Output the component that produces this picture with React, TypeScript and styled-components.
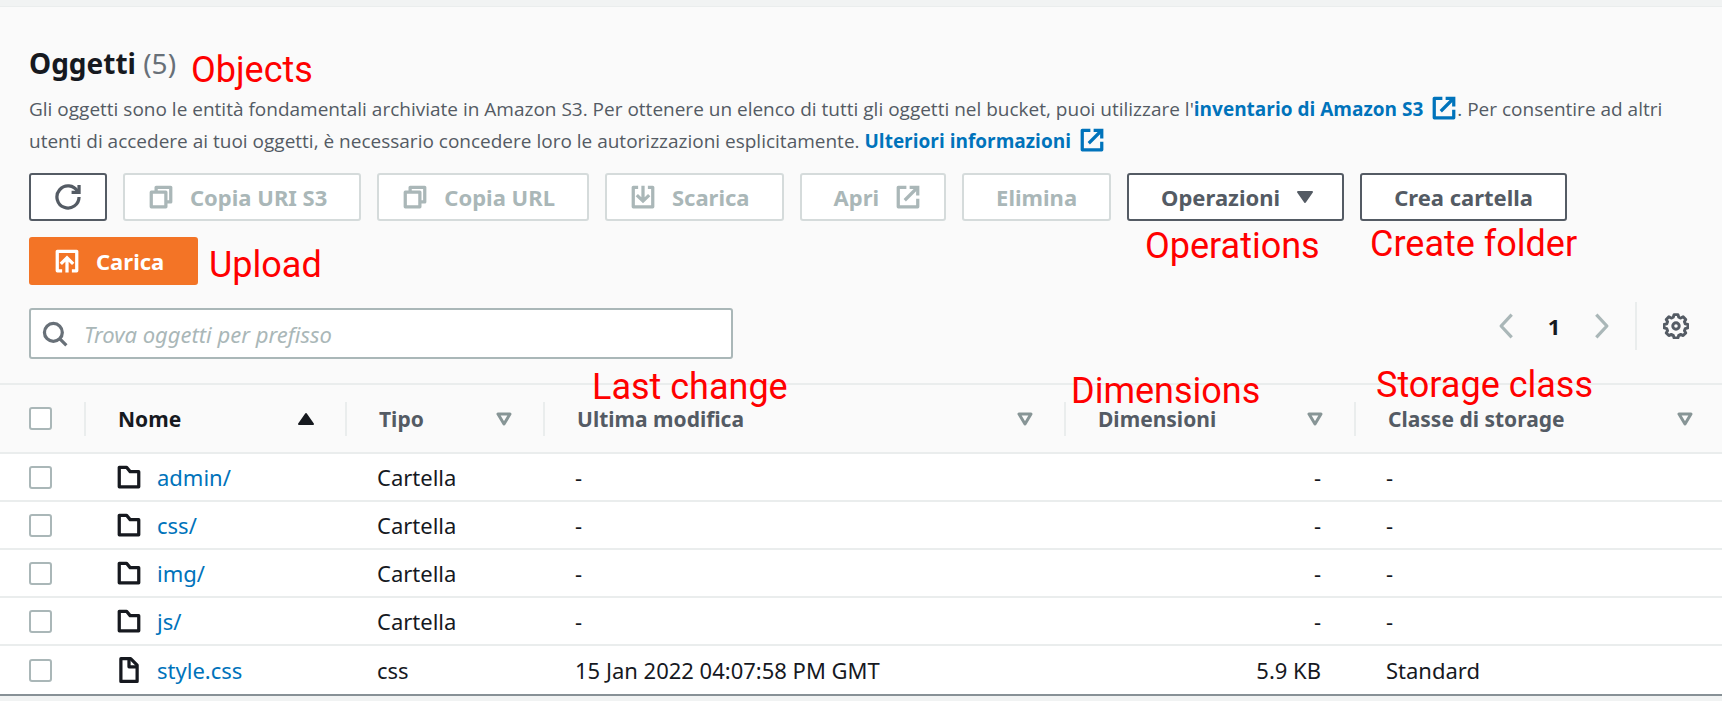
import React from "react";
import styled, { createGlobalStyle, css } from "styled-components";

const Global = createGlobalStyle`
  * { box-sizing: border-box; }
  body { margin: 0; background: #f1f3f3; color: #16191f; font-family: "Noto Sans", "Open Sans", sans-serif; font-size: 22px; }
  button, input { font-family: inherit; }
`;

const Page = styled.main`
  padding: 6px 0;
`;

const Panel = styled.section`
  position: relative;
  background: #fafafa;
  border-top: 1px solid #eaeded;
  border-bottom: 2px solid #879196;
`;

const Header = styled.header`
  padding: 38px 29px 0;
`;

const Title = styled.h2`
  margin: 0;
  font-size: 28px;
  line-height: 36px;
  font-weight: 700;
`;

const Count = styled.span`
  color: #687078;
  font-weight: 400;
`;

const Description = styled.p`
  margin: 12px 0 0;
  color: #545b64;
  font-family: "Open Sans", "Noto Sans", sans-serif;
  font-size: 19px;
  line-height: 32px;
`;

const InfoLink = styled.a`
  color: #0073bb;
  font-weight: 700;
  text-decoration: none;
  white-space: nowrap;
  svg { margin-left: 8px; vertical-align: -5px; }
`;

const Toolbar = styled.div`
  display: flex;
  flex-wrap: wrap;
  gap: 16px;
  margin-top: 16px;
`;

type Glyph = "only" | "start" | "end" | "caret";

const buttonPadding: Record<Glyph, string> = {
  only: "0 24px",
  start: "0 32px 0 23px",
  end: "0 23px 0 32px",
  caret: "0 28px 0 32px",
};

const ActionButton = styled.button<{ $primary?: boolean; $glyph?: Glyph }>`
  display: flex;
  align-items: center;
  gap: 16px;
  height: 48px;
  padding: ${(p) => (p.$glyph ? buttonPadding[p.$glyph] : "0 32px")};
  border: 2px solid #545b64;
  border-radius: 3px;
  background: #fff;
  color: #545b64;
  font-size: 22px;
  font-weight: 700;
  &:disabled { border-color: #d5dbdb; color: #aab7b8; }
  ${(p) => p.$primary && css`
    border-color: #f37426;
    background: #f37426;
    color: #fff;
  `}
`;

const Tools = styled.div`
  display: flex;
  justify-content: space-between;
  align-items: flex-start;
  padding: 17px 33px 24px 29px;
`;

const Search = styled.label`
  display: flex;
  align-items: center;
  gap: 16px;
  width: 704px;
  height: 51px;
  margin-top: 6px;
  padding: 0 11px;
  border: 2px solid #aab7b8;
  border-radius: 3px;
  background: #fff;
  color: #687078;
`;

const SearchInput = styled.input`
  flex: 1;
  min-width: 0;
  padding: 0;
  border: 0;
  outline: 0;
  background: none;
  font-size: 22px;
  &::placeholder { color: #aab7b8; font-style: italic; opacity: 1; }
`;

const Pager = styled.nav`
  display: flex;
  align-items: center;
  height: 48px;
`;

const PlainButton = styled.button`
  display: flex;
  padding: 0;
  border: 0;
  background: none;
  color: #545b64;
  &:disabled { color: #aab7b8; }
`;

const PageNumber = styled(PlainButton)`
  justify-content: center;
  width: 70px;
  color: #16191f;
  font-size: 22px;
  font-weight: 700;
`;

const Settings = styled.div`
  display: flex;
  align-items: center;
  height: 48px;
  margin-left: 20px;
  padding-left: 26px;
  border-left: 2px solid #eaeded;
`;

const Table = styled.table`
  width: 100%;
  table-layout: fixed;
  border-collapse: separate;
  border-spacing: 0;
`;

const Col = styled.col<{ $w?: number }>`
  width: ${(p) => (p.$w ? p.$w + "px" : "auto")};
`;

const HeadInner = styled.div<{ $first?: boolean; $active?: boolean }>`
  display: flex;
  align-items: center;
  justify-content: space-between;
  height: 34px;
  padding: 0 30px 0 32px;
  border-left: 2px solid #eaeded;
  color: ${(p) => (p.$active ? "#16191f" : "#545b64")};
  font-size: 21px;
  font-weight: 700;
  ${(p) => p.$first && css`
    padding: 0 0 0 29px;
    border-left: 0;
  `}
`;

const HeadCell = styled.th`
  height: 71px;
  padding: 0;
  border-top: 2px solid #eaeded;
  border-bottom: 2px solid #eaeded;
  text-align: left;
  &:last-child ${HeadInner} { padding-right: 28px; }
`;

const SortIcon = styled.svg<{ $hollow?: boolean }>`
  flex: none;
  color: ${(p) => (p.$hollow ? "#879596" : "inherit")};
`;

const Cell = styled.td<{ $end?: boolean }>`
  height: 48px;
  padding: 0 33px 0 32px;
  border-bottom: 2px solid #eaeded;
  background: #fff;
  font-size: 22px;
  line-height: 28px;
  text-align: ${(p) => (p.$end ? "right" : "left")};
  white-space: nowrap;
  tr:last-child & { border-bottom: 0; }
`;

const CheckCell = styled(Cell)`
  padding: 0 0 0 29px;
`;

const Check = styled.input`
  display: block;
  appearance: none;
  width: 23px;
  height: 23px;
  margin: 0;
  border: 2px solid #aab7b8;
  border-radius: 3px;
  background: #fff;
`;

const ObjectName = styled.div`
  display: flex;
  align-items: center;
  gap: 15px;
`;

const ObjectLink = styled.a`
  color: #0073bb;
  text-decoration: none;
`;

const Note = styled.span<{ $x: number; $y: number }>`
  position: absolute;
  left: ${(p) => p.$x}px;
  top: ${(p) => p.$y}px;
  color: #f00;
  font-family: Roboto, sans-serif;
  font-size: 36px;
  line-height: 42px;
  white-space: nowrap;
  pointer-events: none;
`;

const shapes = {
  refresh: (
    <>
      <path d="M14.8 8A6.8 6.8 0 1 1 13.9 4.6" />
      <path d="M14.8.6V5.2h-4.6" strokeLinejoin="miter" />
    </>
  ),
  copy: (
    <>
      <path d="M2 5h9v9H2z" />
      <path d="M5 5V2h9v9h-3" />
    </>
  ),
  download: (
    <>
      <path d="M5 2H2v12h12V2h-3" />
      <path d="M8 1v9.5M4.2 6.8 8 10.5l3.8-3.7" strokeLinejoin="miter" />
    </>
  ),
  upload: (
    <>
      <path d="M5 14H2V2h12v12h-3" />
      <path d="M8 15V6M4.2 9.8 8 6l3.8 3.8" strokeLinejoin="miter" />
    </>
  ),
  external: (
    <>
      <path d="M10 2h4v4" strokeLinecap="square" strokeLinejoin="miter" />
      <path d="m6 10 8-8" />
      <path d="M14 9v5H2V2h5" />
    </>
  ),
  search: (
    <>
      <circle cx="7" cy="7" r="5.5" />
      <path d="m11 11 4 4" />
    </>
  ),
  left: <path d="M11.5 1 5 8l6.5 7" />,
  right: <path d="M4.5 1 11 8l-6.5 7" />,
  folder: <path d="M2 14V2h4.5l2.2 2.7H14V14z" />,
  file: (
    <>
      <path d="M3 1h6l4 4v10H3z" />
      <path d="M8 1v5h5" />
    </>
  ),
  gear: (
    <>
      <path d="M6.8 1h2.4l.5 1.6 1.2.5 1.5-.8 1.6 1.7-.8 1.4.5 1.3 1.6.4v2l-1.6.5-.5 1.3.8 1.4-1.6 1.6-1.5-.7-1.2.5-.5 1.6H6.8l-.5-1.6-1.2-.5-1.5.7-1.6-1.6.8-1.4-.5-1.3-1.6-.5v-2l1.6-.4.5-1.3L2 4l1.6-1.7 1.5.8 1.2-.5z" />
      <circle cx="8" cy="8" r="2" />
    </>
  ),
};

function Icon({ name }: { name: keyof typeof shapes }) {
  return (
    <svg width="26" height="26" viewBox="0 0 16 16" fill="none" stroke="currentColor" strokeWidth={name === "gear" ? 1.8 : 2} strokeLinejoin="round" aria-hidden="true">
      {shapes[name]}
    </svg>
  );
}

function Caret({ up, hollow }: { up?: boolean; hollow?: boolean }) {
  return (
    <SortIcon $hollow={hollow} width="18" height="14" viewBox="0 0 18 14" stroke="currentColor" strokeLinejoin="round" strokeWidth={hollow ? 3 : 2} fill={hollow ? "none" : "currentColor"} aria-hidden="true">
      <path d={up ? "M2 12 9 2l7 10z" : hollow ? "M3 2h12L9 12z" : "M2 2h14L9 12z"} />
    </SortIcon>
  );
}

const columns = ["Nome", "Tipo", "Ultima modifica", "Dimensioni", "Classe di storage"];

const objects = [
  { name: "admin/", type: "Cartella", modified: "-", size: "-", storage: "-" },
  { name: "css/", type: "Cartella", modified: "-", size: "-", storage: "-" },
  { name: "img/", type: "Cartella", modified: "-", size: "-", storage: "-" },
  { name: "js/", type: "Cartella", modified: "-", size: "-", storage: "-" },
  { name: "style.css", type: "css", modified: "15 Jan 2022 04:07:58 PM GMT", size: "5.9 KB", storage: "Standard" },
];

const notes = [
  { text: "Objects", x: 191, y: 42 },
  { text: "Upload", x: 209, y: 237 },
  { text: "Operations", x: 1145, y: 218 },
  { text: "Create folder", x: 1370, y: 216 },
  { text: "Last change", x: 592, y: 359 },
  { text: "Dimensions", x: 1071, y: 363 },
  { text: "Storage class", x: 1376, y: 357 },
];

export default function App() {
  return (
    <>
      <Global />
      <Page>
        <Panel>
          <Header>
            <Title>Oggetti <Count>(5)</Count></Title>
            <Description>
              Gli oggetti sono le entità fondamentali archiviate in Amazon S3. Per ottenere un elenco di tutti gli oggetti nel bucket, puoi utilizzare l'
              <InfoLink href="#inventario">inventario di Amazon S3<Icon name="external" /></InfoLink>. Per consentire ad altri utenti di accedere ai tuoi oggetti, è necessario concedere loro le autorizzazioni esplicitamente.{" "}
              <InfoLink href="#info">Ulteriori informazioni<Icon name="external" /></InfoLink>
            </Description>
            <Toolbar>
              <ActionButton $glyph="only" aria-label="Aggiorna"><Icon name="refresh" /></ActionButton>
              <ActionButton $glyph="start" disabled><Icon name="copy" />Copia URI S3</ActionButton>
              <ActionButton $glyph="start" disabled><Icon name="copy" />Copia URL</ActionButton>
              <ActionButton $glyph="start" disabled><Icon name="download" />Scarica</ActionButton>
              <ActionButton $glyph="end" disabled>Apri<Icon name="external" /></ActionButton>
              <ActionButton disabled>Elimina</ActionButton>
              <ActionButton $glyph="caret">Operazioni<Caret /></ActionButton>
              <ActionButton>Crea cartella</ActionButton>
              <ActionButton $glyph="start" $primary><Icon name="upload" />Carica</ActionButton>
            </Toolbar>
          </Header>
          <Tools>
            <Search>
              <Icon name="search" />
              <SearchInput type="search" aria-label="Trova oggetti" placeholder="Trova oggetti per prefisso" />
            </Search>
            <Pager aria-label="Pagine">
              <PlainButton disabled aria-label="Pagina precedente"><Icon name="left" /></PlainButton>
              <PageNumber>1</PageNumber>
              <PlainButton disabled aria-label="Pagina successiva"><Icon name="right" /></PlainButton>
              <Settings>
                <PlainButton aria-label="Preferenze"><Icon name="gear" /></PlainButton>
              </Settings>
            </Pager>
          </Tools>
          <Table>
            <colgroup>
              <Col $w={84} /><Col $w={261} /><Col $w={198} /><Col $w={521} /><Col $w={290} /><Col />
            </colgroup>
            <thead>
              <tr>
                <HeadCell><HeadInner $first><Check type="checkbox" aria-label="Seleziona tutti" /></HeadInner></HeadCell>
                {columns.map((c, i) => (
                  <HeadCell key={c} scope="col">
                    <HeadInner $active={i === 0}>{c}<Caret up={i === 0} hollow={i > 0} /></HeadInner>
                  </HeadCell>
                ))}
              </tr>
            </thead>
            <tbody>
              {objects.map((o) => (
                <tr key={o.name}>
                  <CheckCell><Check type="checkbox" aria-label={"Seleziona " + o.name} /></CheckCell>
                  <Cell>
                    <ObjectName>
                      <Icon name={o.type === "Cartella" ? "folder" : "file"} />
                      <ObjectLink href={"#" + o.name}>{o.name}</ObjectLink>
                    </ObjectName>
                  </Cell>
                  <Cell>{o.type}</Cell>
                  <Cell>{o.modified}</Cell>
                  <Cell $end>{o.size}</Cell>
                  <Cell>{o.storage}</Cell>
                </tr>
              ))}
            </tbody>
          </Table>
          {notes.map((n) => <Note key={n.text} $x={n.x} $y={n.y}>{n.text}</Note>)}
        </Panel>
      </Page>
    </>
  );
}
